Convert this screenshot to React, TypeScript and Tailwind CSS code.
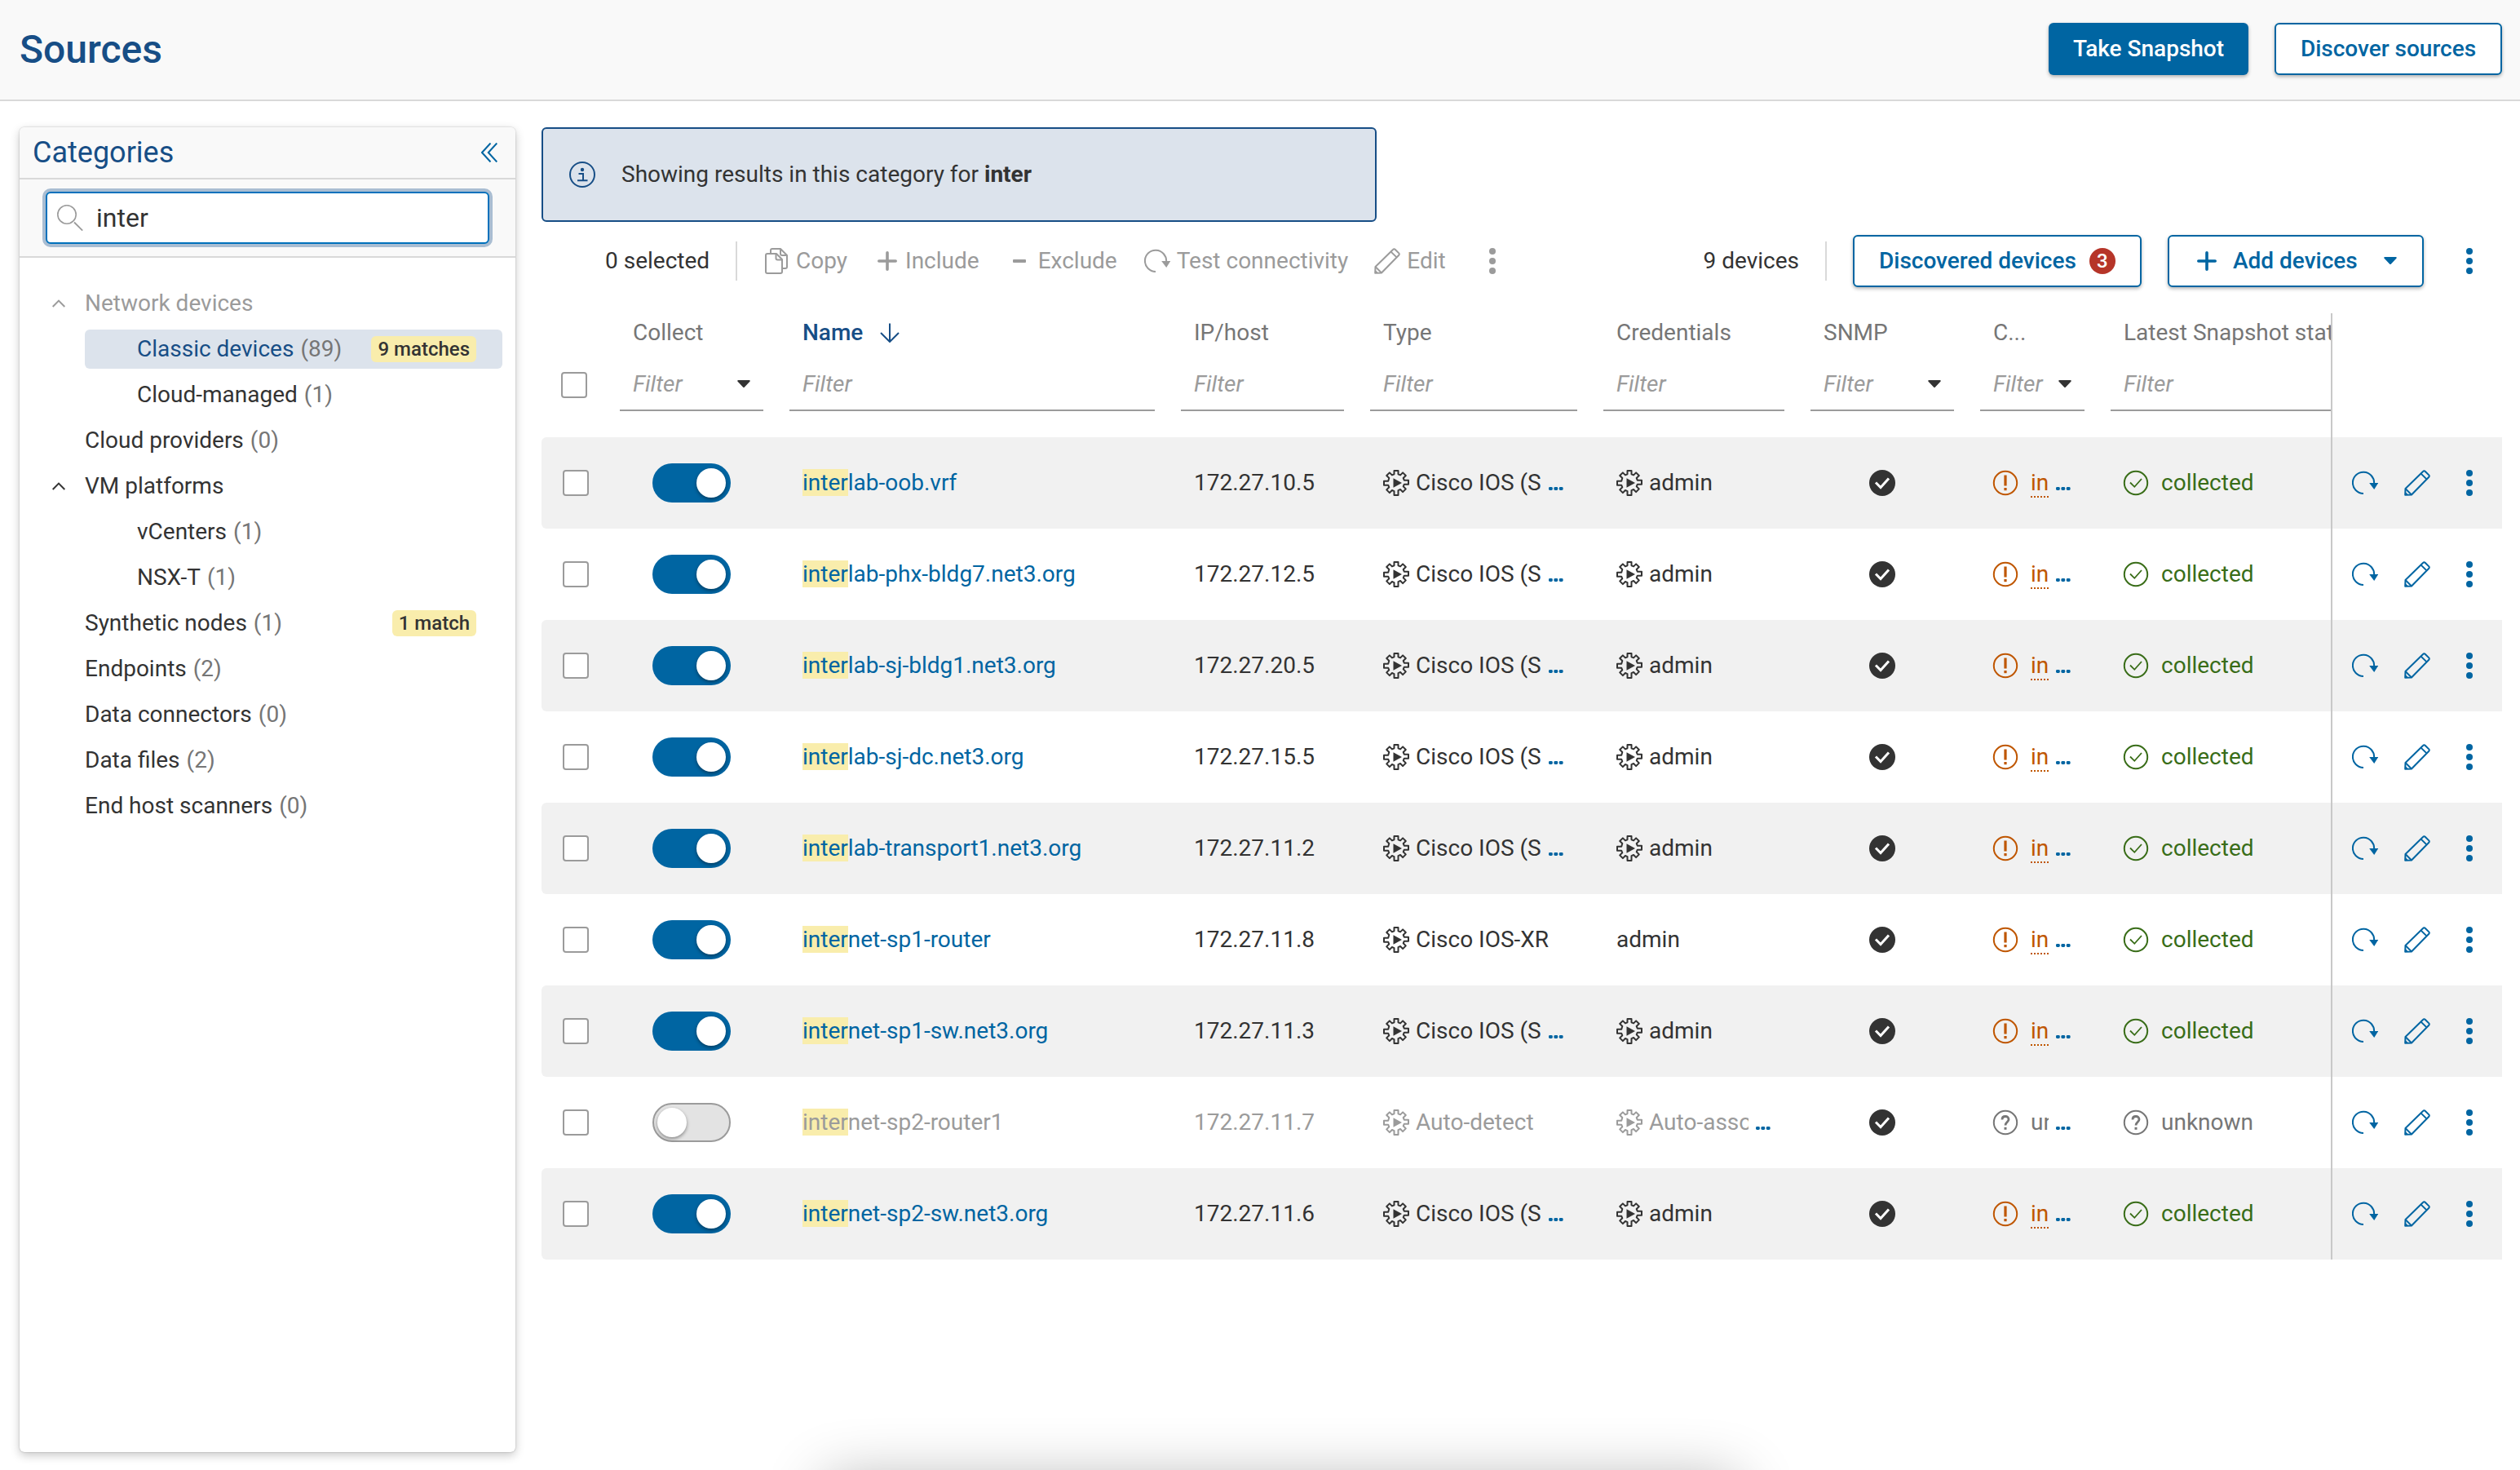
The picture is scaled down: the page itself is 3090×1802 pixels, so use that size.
import React from 'react';
import clsx from 'clsx';

interface IconProps {
  className?: string;
}

interface CategoryItem {
  label: string;
  count?: number;
  nested?: boolean;
  expanded?: boolean;
  disabled?: boolean;
  selected?: boolean;
  matches?: string;
}

interface Device {
  name: string;
  ip: string;
  type: string;
  typeCut?: boolean;
  credential: string;
  detected?: boolean;
  off?: boolean;
}

interface Column {
  label: string;
  width: string;
  select?: boolean;
  sorted?: boolean;
}

const QUERY = 'inter';

const categories: CategoryItem[] = [
  { label: 'Network devices', expanded: true, disabled: true },
  { label: 'Classic devices', count: 89, nested: true, selected: true, matches: '9 matches' },
  { label: 'Cloud-managed', count: 1, nested: true },
  { label: 'Cloud providers', count: 0 },
  { label: 'VM platforms', expanded: true },
  { label: 'vCenters', count: 1, nested: true },
  { label: 'NSX-T', count: 1, nested: true },
  { label: 'Synthetic nodes', count: 1, matches: '1 match' },
  { label: 'Endpoints', count: 2 },
  { label: 'Data connectors', count: 0 },
  { label: 'Data files', count: 2 },
  { label: 'End host scanners', count: 0 },
];

const columns: Column[] = [
  { label: 'Collect', width: 'w-[208px]', select: true },
  { label: 'Name', width: 'w-[480px]', sorted: true },
  { label: 'IP/host', width: 'w-[232px]' },
  { label: 'Type', width: 'w-[286px]' },
  { label: 'Credentials', width: 'w-[254px]' },
  { label: 'SNMP', width: 'w-[208px]', select: true },
  { label: 'C...', width: 'w-[160px]', select: true },
  { label: 'Latest Snapshot stat', width: 'w-[340px]' },
];

const devices: Device[] = [
  { name: 'interlab-oob.vrf', ip: '172.27.10.5', type: 'Cisco IOS (S', typeCut: true, credential: 'admin', detected: true },
  { name: 'interlab-phx-bldg7.net3.org', ip: '172.27.12.5', type: 'Cisco IOS (S', typeCut: true, credential: 'admin', detected: true },
  { name: 'interlab-sj-bldg1.net3.org', ip: '172.27.20.5', type: 'Cisco IOS (S', typeCut: true, credential: 'admin', detected: true },
  { name: 'interlab-sj-dc.net3.org', ip: '172.27.15.5', type: 'Cisco IOS (S', typeCut: true, credential: 'admin', detected: true },
  { name: 'interlab-transport1.net3.org', ip: '172.27.11.2', type: 'Cisco IOS (S', typeCut: true, credential: 'admin', detected: true },
  { name: 'internet-sp1-router', ip: '172.27.11.8', type: 'Cisco IOS-XR', credential: 'admin' },
  { name: 'internet-sp1-sw.net3.org', ip: '172.27.11.3', type: 'Cisco IOS (S', typeCut: true, credential: 'admin', detected: true },
  { name: 'internet-sp2-router1', ip: '172.27.11.7', type: 'Auto-detect', credential: 'Auto-associate', detected: true, off: true },
  { name: 'internet-sp2-sw.net3.org', ip: '172.27.11.6', type: 'Cisco IOS (S', typeCut: true, credential: 'admin', detected: true },
];

// Icons

const SearchIcon = ({ className }: IconProps) => (
  <svg className={className} viewBox="0 0 32 32" fill="none" stroke="currentColor">
    <circle cx="12" cy="12" r="11.2" strokeWidth="1.6" />
    <path d="M21 21.5 31.2 31.6" strokeWidth="1.8" />
  </svg>
);

const CollapseIcon = ({ className }: IconProps) => (
  <svg className={className} viewBox="0 0 20 24" fill="none" stroke="currentColor" strokeWidth="2">
    <path d="M11.5 0.5 1 12l10.5 11.5M19.3 0.5 8.8 12l10.5 11.5" />
  </svg>
);

const ChevronUpIcon = ({ className }: IconProps) => (
  <svg className={className} viewBox="0 0 16 10" fill="none" stroke="currentColor" strokeWidth="2">
    <path d="M0.7 9 8 1.6 15.3 9" />
  </svg>
);

const InfoIcon = ({ className }: IconProps) => (
  <svg className={className} viewBox="0 0 32 32" fill="none" stroke="currentColor" strokeWidth="2">
    <circle cx="16" cy="16" r="15" />
    <circle cx="16" cy="10" r="2.2" fill="currentColor" stroke="none" />
    <path d="M11.5 15H17v8M10 23.3h12.5" />
  </svg>
);

const CopyIcon = ({ className }: IconProps) => (
  <svg className={className} viewBox="0 0 28 32" fill="none" stroke="currentColor" strokeWidth="2" strokeLinejoin="round">
    <path d="M3 7h11l7 7v15a2 2 0 0 1-2 2H3a2 2 0 0 1-2-2V9a2 2 0 0 1 2-2z" />
    <path d="M13.5 7v5.5a2 2 0 0 0 2 2H21" />
    <path d="M7 7V3a2 2 0 0 1 2-2h10l8 8v14a2 2 0 0 1-2 2h-4" />
    <path d="M19 1v6a2 2 0 0 0 2 2h6" />
  </svg>
);

const PlusIcon = ({ className }: IconProps) => (
  <svg className={className} viewBox="0 0 24 24" fill="none" stroke="currentColor" strokeWidth="3.6" strokeLinecap="round">
    <path d="M12 1.8v20.4M1.8 12h20.4" />
  </svg>
);

const MinusIcon = ({ className }: IconProps) => (
  <svg className={className} viewBox="0 0 16 4" fill="currentColor">
    <rect width="16" height="4" rx="1" />
  </svg>
);

const RefreshIcon = ({ className }: IconProps) => (
  <svg className={className} viewBox="0 0 32 32" fill="none" stroke="currentColor" strokeWidth="2">
    <path d="M14 28.900A13.1 13.1 0 1 1 27.1 16.500" />
    <path d="M21.200 16H32.200L27.200 24z" fill="currentColor" stroke="none" />
  </svg>
);

const PencilIcon = ({ className }: IconProps) => (
  <svg className={className} viewBox="0 0 32 32" fill="none" stroke="currentColor" strokeWidth="2" strokeLinejoin="round">
    <path d="M1.2 30.8 1.5 23 23.3 1.7a1.6 1.6 0 0 1 2.3 0l4.7 4.7a1.6 1.6 0 0 1 0 2.3L9 30.5z" />
    <path d="M20.6 4.6 27.5 11.4M1.5 23 9 30.5" />
    <path d="M1 26.5 5.5 31H1z" fill="currentColor" stroke="none" />
  </svg>
);

const DotsIcon = ({ className }: IconProps) => (
  <svg className={className} viewBox="0 0 8 32" fill="currentColor">
    <circle cx="4" cy="4" r="4" />
    <circle cx="4" cy="16" r="4" />
    <circle cx="4" cy="28" r="4" />
  </svg>
);

const CaretIcon = ({ className }: IconProps) => (
  <svg className={className} viewBox="0 0 16 10" fill="currentColor">
    <path d="M1.2 0h13.6a1 1 0 0 1 .8 1.6L9 8.6a1.400 1.400 0 0 1-2 0L.4 1.600A1 1 0 0 1 1.200 0z" />
  </svg>
);

const ArrowDownIcon = ({ className }: IconProps) => (
  <svg className={className} viewBox="0 0 24 24" fill="none" stroke="currentColor" strokeWidth="2">
    <path d="M12 0.5v22M1 12l11 11 11-11" />
  </svg>
);

const GearPlayIcon = ({ className }: IconProps) => (
  <svg className={className} viewBox="0 0 32 32" fill="none" stroke="currentColor" strokeWidth="2" strokeLinejoin="round">
    <path d="M13.5 1h5v4.300l2.600 1.100 3-3 3.700 3.600-3.100 3 1.100 2.700H31v5h-5.200l-1.100 2.600 3.100 3.100-3.700 3.700-3-3.100-2.600 1.100V31h-5v-4.900l-2.600-1.100-3 3.100-3.700-3.700 3.100-3.100-1.100-2.600H1v-5h5.200L7.300 10 4.200 7l3.700-3.600 3 3 2.600-1.100z" />
    <path d="M12.500 10.200v11.600L23 16z" fill="currentColor" stroke="none" />
  </svg>
);

const CheckSolidIcon = ({ className }: IconProps) => (
  <svg className={className} viewBox="0 0 32 32" fill="none">
    <circle cx="16" cy="16" r="16" fill="currentColor" />
    <path d="M8 15.5 14 21.5 24 10.5" stroke="#fff" strokeWidth="3" />
  </svg>
);

const CheckCircleIcon = ({ className }: IconProps) => (
  <svg className={className} viewBox="0 0 32 32" fill="none" stroke="currentColor" strokeWidth="2">
    <circle cx="16" cy="16" r="14.2" />
    <path d="M9 15.5 14.3 20.8 23 11" strokeWidth="1.8" />
  </svg>
);

const WarningIcon = ({ className }: IconProps) => (
  <svg className={className} viewBox="0 0 32 32" fill="none" stroke="currentColor" strokeWidth="2">
    <circle cx="16" cy="16" r="14.2" />
    <path d="M16 6.5v13" strokeWidth="3.2" />
    <path d="M16 22v3.2" strokeWidth="3.2" />
  </svg>
);

const QuestionIcon = ({ className }: IconProps) => (
  <svg className={className} viewBox="0 0 32 32" fill="none" stroke="currentColor" strokeWidth="2">
    <circle cx="16" cy="16" r="14.2" />
    <path d="M12 12.5c0-2.500 1.700-4 4-4s4 1.500 4 3.700c0 3.300-4 3.300-4 7.300" strokeWidth="2.8" />
    <path d="M16 21.8v3" strokeWidth="3" />
  </svg>
);

const EllipsisIcon = ({ className }: IconProps) => (
  <svg className={className} viewBox="0 0 18 4" fill="currentColor">
    <rect x="0" width="4.8" height="4" rx="1.4" />
    <rect x="6.4" width="4.8" height="4" rx="1.4" />
    <rect x="12.8" width="4.8" height="4" rx="1.4" />
  </svg>
);

// Small pieces

const Checkbox = () => (
  <div className="h-8 w-8 shrink-0 rounded-[4px] border-2 border-[#9b9b9b] bg-white" />
);

const Toggle = ({ off }: { off?: boolean }) => (
  <div
    className={clsx(
      'flex h-12 w-24 items-center rounded-full',
      off ? 'justify-start border-2 border-[#9b9b9b] bg-[#e3e3e3] px-1' : 'justify-end bg-[#0065a2] px-1.5'
    )}
  >
    <div className="h-9 w-9 rounded-full bg-white shadow-[0_2px_4px_rgba(0,0,0,0.4)]" />
  </div>
);

const More = () => (
  <div className="pt-3.5 pl-[9px]">
    <EllipsisIcon className="h-1 w-[18px] text-[#0065a2]" />
  </div>
);

const OutlineButton = ({ className, children }: { className?: string; children: React.ReactNode }) => (
  <button
    className={clsx(
      'flex h-16 items-center rounded-[6px] border-2 border-[#0065a2] bg-white font-medium whitespace-nowrap text-[#0065a2] shadow-[0_2px_4px_rgba(0,0,0,0.3)]',
      className
    )}
  >
    {children}
  </button>
);

function CategoryRow({ item }: { item: CategoryItem }) {
  return (
    <div className="flex h-12 items-center">
      <div className="flex w-20 shrink-0 justify-center">
        {item.expanded && (
          <ChevronUpIcon
            className={clsx('mr-[-16px] h-2.5 w-4', item.disabled ? 'text-[#9b9b9b]' : 'text-[#333]')}
          />
        )}
      </div>
      <div
        className={clsx(
          'flex h-12 flex-1 items-center rounded-[6px] pr-8',
          item.nested && 'pl-16',
          item.selected && 'bg-[#dce3ec]'
        )}
      >
        <span
          className={clsx(
            item.selected && 'text-[#174e86]',
            item.disabled && 'text-[#9b9b9b]'
          )}
        >
          {item.label}
        </span>
        {item.count !== undefined && <span className="ml-2 text-[#767676]">({item.count})</span>}
        {item.matches && (
          <span className="ml-auto flex h-8 items-center rounded-[6px] bg-[#f9edac] px-2 text-[24px] font-medium">
            {item.matches}
          </span>
        )}
      </div>
    </div>
  );
}

function Sidebar() {
  return (
    <aside className="flex h-[1624px] w-[608px] shrink-0 flex-col rounded-[6px] bg-white shadow-[0_4px_12px_rgba(0,0,0,0.22),0_0_2px_rgba(0,0,0,0.25)]">
      <div className="flex h-16 shrink-0 items-center justify-between rounded-t-[6px] border-b-2 border-[#d9d9d9] bg-[#f9f9f9] pr-[22px] pl-4">
        <h2 className="pt-0.5 text-[36px] text-[#174e86]">Categories</h2>
        <CollapseIcon className="h-6 w-5 text-[#0065a2]" />
      </div>
      <div className="flex h-24 shrink-0 items-center border-b-2 border-[#d9d9d9] bg-[#f9f9f9] px-8">
        <div className="flex h-16 w-full items-center rounded-[6px] border-2 border-[#0071bc] bg-white pl-3 ring-4 ring-[#a9bdd2]">
          <SearchIcon className="h-8 w-8 text-[#9b9b9b]" />
          <span className="ml-4 text-[32px]">{QUERY}</span>
        </div>
      </div>
      <div className="flex flex-col gap-2 py-8 pr-4">
        {categories.map((item) => (
          <CategoryRow key={item.label} item={item} />
        ))}
      </div>
    </aside>
  );
}

function Toolbar() {
  return (
    <div className="mt-4 flex h-16 items-center pr-9 pl-[78px] text-[#9b9b9b]">
      <span className="w-[129px] text-[#333]">0 selected</span>
      <div className="ml-[31px] h-12 w-0.5 bg-[#d9d9d9]" />
      <CopyIcon className="ml-[34px] h-8 w-7" />
      <span className="ml-2.5">Copy</span>
      <PlusIcon className="ml-[37px] h-6 w-6" />
      <span className="ml-2.5">Include</span>
      <MinusIcon className="ml-[41px] h-1 w-4" />
      <span className="ml-[15px]">Exclude</span>
      <RefreshIcon className="ml-[33px] h-8 w-8" />
      <span className="ml-2">Test connectivity</span>
      <PencilIcon className="ml-8 h-8 w-8" />
      <span className="ml-2">Edit</span>
      <DotsIcon className="ml-[53px] h-8 w-2" />

      <span className="ml-auto text-[#333]">9 devices</span>
      <div className="ml-8 h-12 w-0.5 bg-[#d9d9d9]" />
      <OutlineButton className="ml-8 w-[354px] pl-[30px]">
        Discovered devices
        <span className="ml-4 flex h-8 w-8 items-center justify-center rounded-full bg-[#b63529] text-[24px] text-white">
          3
        </span>
      </OutlineButton>
      <OutlineButton className="ml-8 w-[314px] pl-[34px]">
        <PlusIcon className="h-6 w-6" />
        <span className="ml-5">Add devices</span>
        <CaretIcon className="ml-8 h-2.5 w-4" />
      </OutlineButton>
      <DotsIcon className="ml-[52px] h-8 w-2 text-[#0065a2]" />
    </div>
  );
}

function TableHeader() {
  return (
    <div className="flex h-[152px]">
      <div className="flex w-20 shrink-0 pt-[72px] pl-6">
        <Checkbox />
      </div>
      {columns.map((col) => (
        <div key={col.label} className={clsx('shrink-0 px-4', col.width)}>
          <div
            className={clsx(
              'flex h-12 items-center pl-4 whitespace-nowrap',
              col.sorted ? 'font-medium text-[#174e86]' : 'text-[#767676]'
            )}
          >
            {col.label}
            {col.sorted && <ArrowDownIcon className="ml-[21px] h-6 w-6" />}
          </div>
          <div className="flex h-[72px] items-center justify-between border-b-2 border-[#9b9b9b] px-4 pt-2 text-[#9b9b9b] italic">
            Filter
            {col.select && <CaretIcon className="h-2.5 w-4 text-[#333]" />}
          </div>
        </div>
      ))}
    </div>
  );
}

function DeviceRow({ device, striped }: { device: Device; striped: boolean }) {
  const muted = device.off && 'text-[#9b9b9b]';

  return (
    <div className={clsx('flex h-28 items-center rounded-l-[6px]', striped && 'bg-[#f1f1f1]')}>
      <div className="w-20 shrink-0 pl-[26px]">
        <Checkbox />
      </div>
      <div className="flex w-[208px] shrink-0 pl-14">
        <Toggle off={device.off} />
      </div>
      <div className={clsx('w-[480px] shrink-0 pl-8', device.off ? 'text-[#9b9b9b]' : 'text-[#0065a2]')}>
        <mark className="bg-[#f9edac] text-inherit">{QUERY}</mark>
        {device.name.slice(QUERY.length)}
      </div>
      <div className={clsx('w-[232px] shrink-0 pl-8', muted)}>{device.ip}</div>
      <div className={clsx('flex w-[286px] shrink-0 items-center pl-8', muted)}>
        <GearPlayIcon className="mr-2 h-8 w-8 shrink-0" />
        <span className={clsx('whitespace-nowrap', device.typeCut && 'w-[154px]')}>{device.type}</span>
        {device.typeCut && <More />}
      </div>
      <div className={clsx('flex w-[254px] shrink-0 items-center pl-8', muted)}>
        {device.detected && <GearPlayIcon className="mr-2 h-8 w-8 shrink-0" />}
        <span className={clsx('overflow-hidden whitespace-nowrap', device.off && 'w-[122px]')}>
          {device.credential}
        </span>
        {device.off && <More />}
      </div>
      <div className="flex w-[208px] shrink-0 justify-center">
        <CheckSolidIcon className="h-8 w-8 text-[#333]" />
      </div>
      <div className={clsx('flex w-[160px] shrink-0 items-center pl-[31px]', device.off ? 'text-[#767676]' : 'text-[#bf5600]')}>
        {device.off ? <QuestionIcon className="h-8 w-8 shrink-0" /> : <WarningIcon className="h-8 w-8 shrink-0" />}
        <span
          className={clsx(
            'ml-[15px] w-[22px] shrink-0 overflow-hidden leading-8 whitespace-nowrap',
            !device.off && 'border-b-2 border-dotted border-[#bf5600] pt-0.5'
          )}
        >
          {device.off ? 'unknown' : 'in'}
        </span>
        <More />
      </div>
      <div className={clsx('flex w-[340px] shrink-0 items-center pl-[31px]', device.off ? 'text-[#767676]' : 'text-[#396d18]')}>
        {device.off ? <QuestionIcon className="h-8 w-8" /> : <CheckCircleIcon className="h-8 w-8" />}
        <span className="ml-[15px]">{device.off ? 'unknown' : 'collected'}</span>
      </div>
    </div>
  );
}

function DeviceTable() {
  return (
    <div className="mt-8 flex">
      <div className="w-[2196px] overflow-hidden border-r-2 border-[#c8c8c8]">
        <TableHeader />
        {devices.map((device, i) => (
          <DeviceRow key={device.name} device={device} striped={i % 2 === 0} />
        ))}
      </div>
      {/* pinned row actions */}
      <div className="flex-1 pt-[152px] text-[#0065a2]">
        {devices.map((device, i) => (
          <div key={device.name} className={clsx('flex h-28 items-center pl-6', i % 2 === 0 && 'bg-[#f1f1f1]')}>
            <RefreshIcon className="h-8 w-8" />
            <PencilIcon className="ml-8 h-8 w-8" />
            <DotsIcon className="ml-11 h-8 w-2" />
          </div>
        ))}
      </div>
    </div>
  );
}

export default function App() {
  return (
    <div className="relative h-[1802px] w-[3090px] overflow-hidden bg-white font-[Roboto,sans-serif] text-[28px] leading-[1.2] text-[#333]">
      <header className="flex h-[124px] items-center justify-between border-b-2 border-[#d9d9d9] bg-[#f9f9f9] pr-[22px] pb-0.5 pl-6">
        <h1 className="pt-0.5 text-[48px] font-medium text-[#174e86]">Sources</h1>
        <div className="flex gap-8">
          <button className="flex h-16 w-[245px] items-center justify-center rounded-[6px] bg-[#0065a2] font-medium text-white shadow-[0_2px_4px_rgba(0,0,0,0.3)]">
            Take Snapshot
          </button>
          <OutlineButton className="w-[279px] justify-center">Discover sources</OutlineButton>
        </div>
      </header>

      <div className="flex gap-8 pt-8 pl-6">
        <Sidebar />
        <main className="w-[2404px] shrink-0">
          <div className="flex h-[116px] w-[1024px] items-center rounded-[6px] border-2 border-[#174e86] bg-[#dce3ec] pl-8">
            <InfoIcon className="h-8 w-8 text-[#174e86]" />
            <p className="ml-8">
              Showing results in this category for <b className="font-bold">{QUERY}</b>
            </p>
          </div>
          <Toolbar />
          <DeviceTable />
        </main>
      </div>

      <div className="absolute top-[1814px] left-[1012px] h-40 w-[1118px] rounded-lg shadow-[0_0_72px_rgba(0,0,0,0.3)]" />
    </div>
  );
}
